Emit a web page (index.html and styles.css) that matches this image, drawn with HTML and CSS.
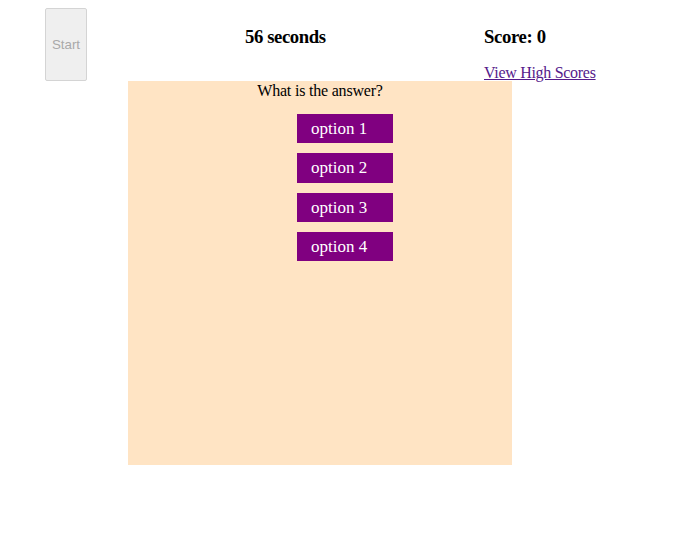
FILE: index.html
```html
<!DOCTYPE html>
<html>
<head>
<meta charset="utf-8">
<link rel="stylesheet" href="styles.css">
</head>
<body>
<header class="top">
  <button class="start" disabled>Start</button>
  <div class="timer">56 seconds</div>
  <div class="scorebox">
    <div class="score">Score: 0</div>
    <a class="hs" href="#">View High Scores</a>
  </div>
</header>
<main class="quiz">
  <div class="question">What is the answer?</div>
  <div class="options">
    <div class="opt">option 1</div>
    <div class="opt">option 2</div>
    <div class="opt">option 3</div>
    <div class="opt">option 4</div>
  </div>
</main>
</body>
</html>
```
FILE: styles.css
```css
body {
  margin: 8px;
  font-family: "Liberation Serif", "Times New Roman", serif;
  font-size: 16px;
  color: #000;
  background: #fff;
}
.top {
  display: flex;
  height: 73px;
  margin-left: 37px;
}
.start {
  width: 42px;
  height: 73px;
  padding: 0;
  background: #efefef;
  border: 1px solid #d4d4d4;
  border-radius: 2px;
  color: #a9a9a9;
  font-family: "Liberation Sans", Arial, sans-serif;
  font-size: 13.33px;
}
.timer {
  margin-left: 158px;
  width: 239px;
  padding-top: 18px;
  font-weight: bold;
  font-size: 18.72px;
  line-height: 21.5px;
  letter-spacing: -0.4px;
}
.scorebox {
  padding-top: 18px;
  display: flex;
  flex-direction: column;
  align-items: flex-start;
}
.score {
  font-weight: bold;
  font-size: 18.72px;
  line-height: 21.5px;
  letter-spacing: -0.35px;
}
.hs {
  margin-top: 16px;
  color: #551a8b;
  line-height: 18px;
  letter-spacing: -0.3px;
}
.quiz {
  margin-left: 120px;
  width: 384px;
  height: 384px;
  background: #ffe4c4;
}
.question {
  text-align: center;
  line-height: 18px;
  padding-top: 1px;
  letter-spacing: -0.2px;
}
.options {
  display: flex;
  flex-direction: column;
  gap: 10px;
  margin-top: 14px;
  padding-left: 168.7px;
}
.opt {
  width: 96.7px;
  height: 29.33px;
  box-sizing: border-box;
  background: #800080;
  color: #fff;
  font-size: 17px;
  line-height: 29.33px;
  padding-left: 14.3px;
}
```
